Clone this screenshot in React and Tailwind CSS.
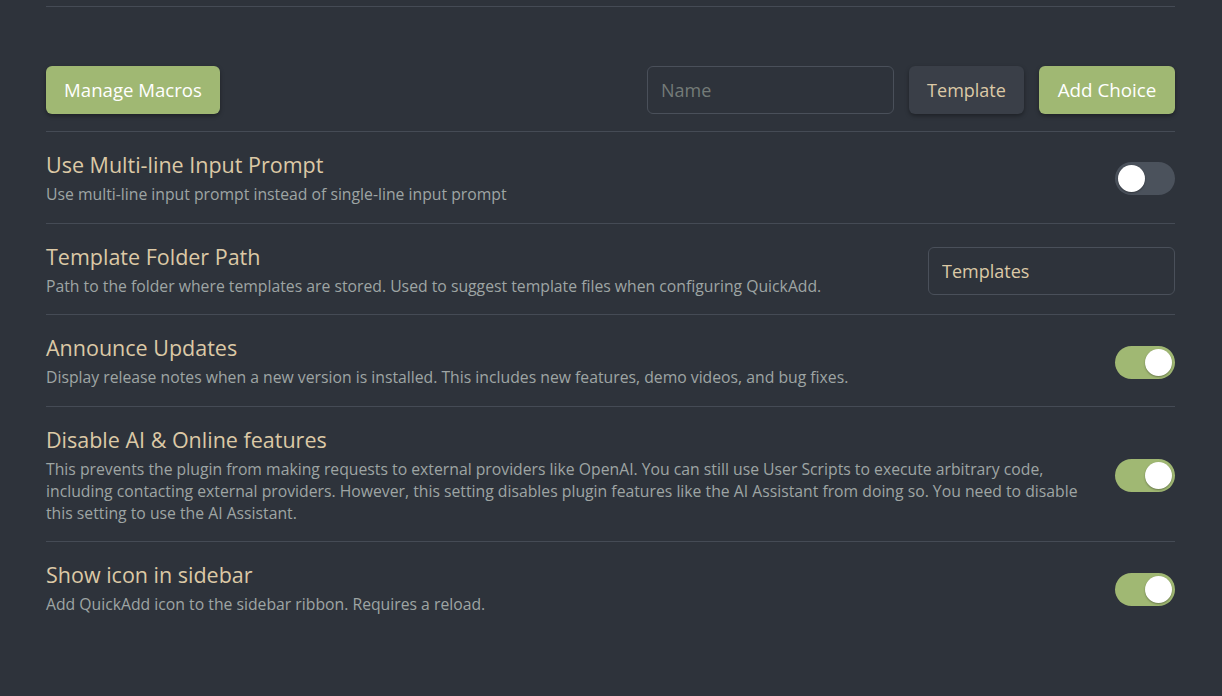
import React from 'react'

const font = { fontFamily: '"Open Sans", "Noto Sans", sans-serif' }

const Toggle = ({ on }) => (
  <div
    className={`relative w-[60px] h-[33px] rounded-full shrink-0 ${on ? 'bg-[#a0b873]' : 'bg-[#4b525c]'}`}
  >
    <div
      className={`absolute top-[3px] w-[27px] h-[27px] rounded-full bg-white shadow-[0_1px_2px_rgba(0,0,0,0.35)] ${on ? 'right-[3px]' : 'left-[3px]'}`}
    />
  </div>
)

const Setting = ({ title, desc, children, last }) => (
  <div className={`flex items-center justify-between pt-[20px] pb-[17px] ${last ? '' : 'border-b border-[#454b55]'}`}>
    <div className="pr-[28px]">
      <div className="text-[21.5px] leading-[26px] text-[#dcc9a6]">{title}</div>
      <div className="mt-[6px] text-[15.75px] leading-[21.7px] text-[#9ea5a4]">{desc}</div>
    </div>
    {children}
  </div>
)

export default function App() {
  return (
    <div className="min-h-[696px] bg-[#2e333b]" style={font}>
      <div className="ml-[46px] w-[1129px]">
        <div className="h-[7px] border-b border-[#454b55]" />

        {/* toolbar */}
        <div className="flex items-center justify-between pt-[59px] pb-[17px] border-b border-[#454b55]">
          <button className="h-[48px] w-[174px] rounded-[6px] bg-[#a0b873] text-white text-[18.6px] shadow-[0_2px_4px_rgba(0,0,0,0.35)]">
            Manage Macros
          </button>
          <div className="flex items-center">
            <input
              className="w-[247px] h-[48px] px-[13px] rounded-[6px] border border-[#4a505a] bg-[#2e333b] text-[18px] text-[#dcc9a6] placeholder:text-[#747b78] outline-none"
              placeholder="Name"
            />
            <button className="ml-[15px] w-[115px] h-[48px] rounded-[6px] bg-[#3a3f48] text-[#dcc9a6] text-[18px] shadow-[0_2px_4px_rgba(0,0,0,0.35)]">
              Template
            </button>
            <button className="ml-[15px] w-[136px] h-[48px] rounded-[6px] bg-[#a0b873] text-white text-[18.8px] shadow-[0_2px_4px_rgba(0,0,0,0.35)]">
              Add Choice
            </button>
          </div>
        </div>

        <Setting
          title="Use Multi-line Input Prompt"
          desc="Use multi-line input prompt instead of single-line input prompt"
        >
          <Toggle on={false} />
        </Setting>

        <Setting
          title="Template Folder Path"
          desc="Path to the folder where templates are stored. Used to suggest template files when configuring QuickAdd."
        >
          <input
            className="w-[247px] h-[48px] px-[13px] rounded-[6px] border border-[#4a505a] bg-[#2e333b] text-[18px] text-[#dcc9a6] outline-none shrink-0"
            defaultValue="Templates"
          />
        </Setting>

        <Setting
          title="Announce Updates"
          desc="Display release notes when a new version is installed. This includes new features, demo videos, and bug fixes."
        >
          <Toggle on />
        </Setting>

        <Setting
          title="Disable AI & Online features"
          desc="This prevents the plugin from making requests to external providers like OpenAI. You can still use User Scripts to execute arbitrary code, including contacting external providers. However, this setting disables plugin features like the AI Assistant from doing so. You need to disable this setting to use the AI Assistant."
        >
          <Toggle on />
        </Setting>

        <Setting
          title="Show icon in sidebar"
          desc="Add QuickAdd icon to the sidebar ribbon. Requires a reload."
          last
        >
          <Toggle on />
        </Setting>
      </div>
    </div>
  )
}
